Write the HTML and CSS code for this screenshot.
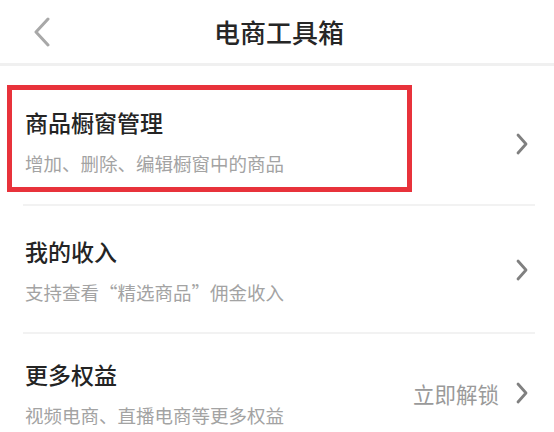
FILE: index.html
```html
<!DOCTYPE html>
<html lang="zh-CN">
<head>
    <meta charset="UTF-8">
    <meta name="viewport" content="width=device-width, initial-scale=1.0">
    <title>电商工具箱</title>
    <link rel="stylesheet" href="styles.css">
</head>
<body>
    <!-- Header -->
    <div class="header">
        <div class="back-btn">
            <svg width="18" height="30" viewBox="0 0 18 30">
                <path d="M15 2 L3 15 L15 28" fill="none" stroke="#a8a8a8" stroke-width="3" stroke-linecap="round" stroke-linejoin="round"/>
            </svg>
        </div>
        <h1 class="title">电商工具箱</h1>
        <div></div>
    </div>

    <!-- Tool list -->
    <ul class="tool-list">
        <li class="tool-item first">
            <div class="highlight">
                <div class="tool-name">商品橱窗管理</div>
                <div class="tool-desc">增加、删除、编辑橱窗中的商品</div>
            </div>
            <div class="tool-action">
                <svg class="chevron" width="14" height="24" viewBox="0 0 14 24">
                    <path d="M3 3 L11 12 L3 21" fill="none" stroke="#808080" stroke-width="2.8" stroke-linecap="round" stroke-linejoin="round"/>
                </svg>
            </div>
        </li>
        <li class="divider"></li>
        <li class="tool-item">
            <div class="tool-text">
                <div class="tool-name">我的收入</div>
                <div class="tool-desc">支持查看“精选商品”佣金收入</div>
            </div>
            <div class="tool-action">
                <svg class="chevron" width="14" height="24" viewBox="0 0 14 24">
                    <path d="M3 3 L11 12 L3 21" fill="none" stroke="#808080" stroke-width="2.8" stroke-linecap="round" stroke-linejoin="round"/>
                </svg>
            </div>
        </li>
        <li class="divider"></li>
        <li class="tool-item last">
            <div class="tool-text">
                <div class="tool-name">更多权益</div>
                <div class="tool-desc">视频电商、直播电商等更多权益</div>
            </div>
            <div class="tool-action">
                <span class="unlock">立即解锁</span>
                <svg class="chevron" width="14" height="24" viewBox="0 0 14 24">
                    <path d="M3 3 L11 12 L3 21" fill="none" stroke="#808080" stroke-width="2.8" stroke-linecap="round" stroke-linejoin="round"/>
                </svg>
            </div>
        </li>
    </ul>
</body>
</html>
```
FILE: styles.css
```css
body {
    margin: 0;
    background-color: #fff;
    font-family: "Noto Sans CJK SC", "Noto Sans", sans-serif;
    color: #222;
}

.header {
    display: grid;
    grid-template-columns: 1fr auto 1fr;
    align-items: center;
    height: 63px;
    border-bottom: 3px solid #f0f0f0;
}

.back-btn {
    display: flex;
    padding-left: 33px;
    padding-top: 1px;
}

.title {
    margin: 0;
    font-size: 26px;
    font-weight: 500;
    line-height: 32px;
    padding-left: 4px;
    color: #262626;
}

.tool-list {
    list-style: none;
    margin: 0;
    padding: 0;
}

.tool-item {
    display: flex;
    align-items: center;
    padding: 29px 0 27px 25px;
}

.tool-item.first {
    padding: 19px 0 12px 7px;
}

.tool-item.last {
    padding-top: 24px;
    padding-bottom: 0;
}

.highlight {
    width: 382px;
    border: 5px solid #e8323b;
    padding: 16px 0 11px 13px;
}

.tool-name {
    font-size: 23px;
    font-weight: 500;
    line-height: 32px;
    color: #242424;
}

.tool-desc {
    margin-top: 12px;
    font-size: 18.5px;
    line-height: 26px;
    color: #a3a3a3;
}

.tool-action {
    margin-left: auto;
    display: flex;
    align-items: center;
    gap: 16px;
    padding-right: 25px;
}

.tool-item.first .tool-action {
    padding-top: 10px;
}

.unlock {
    font-size: 21.5px;
    color: #9a9a9a;
    line-height: 28px;
    margin-top: 2px;
}

.divider {
    height: 2px;
    margin: 0 19px 0 23px;
    background-color: #f2f2f2;
}
```
